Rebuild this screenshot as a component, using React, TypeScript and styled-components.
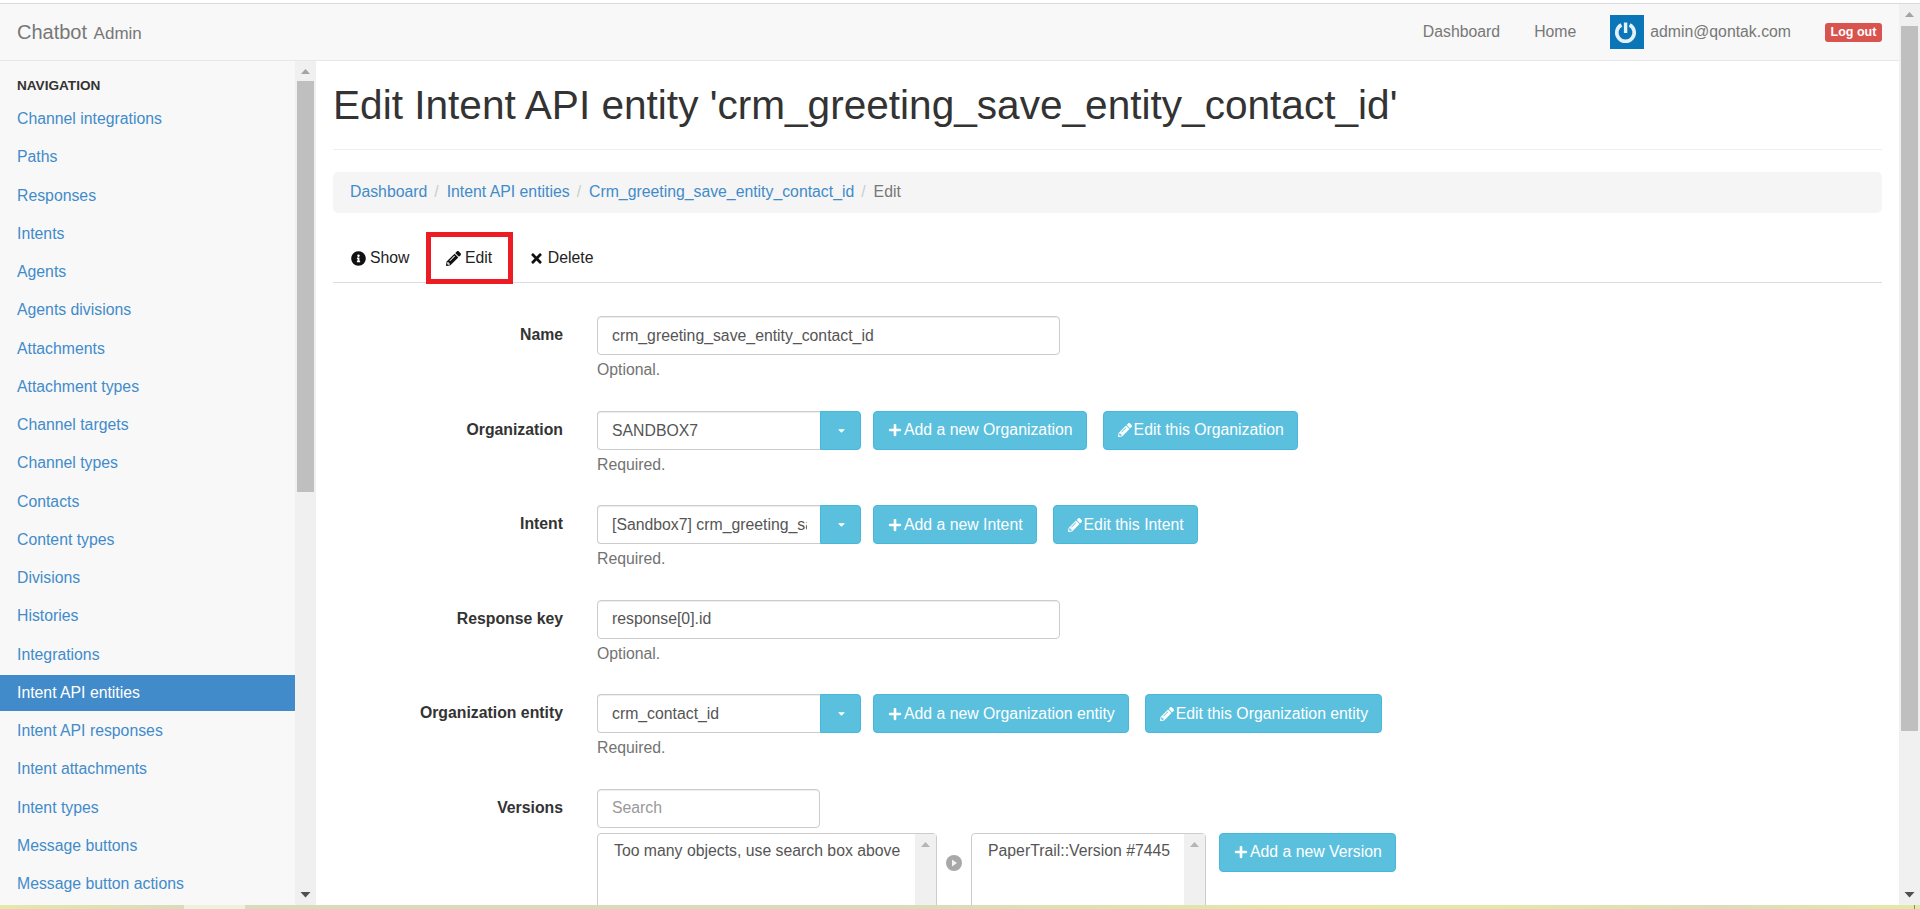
import styled, { createGlobalStyle } from 'styled-components'
import { FaInfoCircle, FaPencilAlt, FaPlus, FaTimes, FaCaretDown } from 'react-icons/fa'

const GlobalStyle = createGlobalStyle`
  html, body {
    margin: 0;
    height: 100%;
    overflow: hidden;
    background: #fff;
  }
  body {
    font-family: "Liberation Sans", Arial, sans-serif;
    font-size: 15.8px;
    color: #333;
  }
  * {
    box-sizing: border-box;
  }
`

const Shell = styled.div`
  height: 909px;
  display: flex;
  flex-direction: column;
`

const TopEdge = styled.div`
  height: 4px;
  flex: none;
  border-bottom: 1px solid #d9d9d9;
`

const Frame = styled.div`
  flex: 1;
  min-height: 0;
  display: flex;
`

const PageColumn = styled.div`
  flex: 1;
  min-width: 0;
  display: flex;
  flex-direction: column;
  overflow: hidden;
`

const BottomStrip = styled.div`
  height: 4px;
  flex: none;
  background: linear-gradient(
    to right,
    #e4e8a8 0,
    #d9dcba 184px,
    #eef1dc 184px,
    #eef1dc 245px,
    #d9dcba 245px,
    #d9dcb8 900px,
    #e3e8a6 1300px,
    #e2e8a8 1500px,
    #dcdcb8 1720px,
    #e2e8a8 1880px,
    #e2e8a8 1914px,
    #8b8b6a 1914px,
    #8b8b6a 1915px,
    #e2e8a8 1915px
  );
`

const ScrollTrack = styled.div`
  width: 21px;
  flex: none;
  display: flex;
  flex-direction: column;
  background: #f0f0f0;
`

const ScrollArrow = styled.svg`
  display: block;
  width: 21px;
  height: 20px;
  flex: none;
`

const ThumbSlot = styled.div`
  flex: 1;
  min-height: 0;
  padding: 0 2px;
`

const Thumb = styled.div<{ $top: number; $height: number }>`
  margin-top: ${(p) => p.$top}px;
  height: ${(p) => p.$height}px;
  background: #bfbfbf;
`

const Navbar = styled.nav`
  height: 57px;
  flex: none;
  background: #f8f8f8;
  border-bottom: 1px solid #e7e7e7;
  display: flex;
  align-items: center;
  justify-content: space-between;
  padding: 0 17px;
`

const Brand = styled.a`
  font-size: 20px;
  color: #777;

  small {
    font-size: 17px;
    margin-left: 1px;
  }
`

const NavLinks = styled.div`
  display: flex;
  align-items: center;
`

const NavLink = styled.a`
  color: #777;
  margin-right: 34px;
  display: flex;
  align-items: center;
`

const Avatar = styled.svg`
  width: 34px;
  height: 34px;
  margin-right: 6px;
  display: block;
`

const LogoutButton = styled.a`
  background: #d9534f;
  color: #fff;
  font-size: 12.5px;
  font-weight: bold;
  border-radius: 3px;
  width: 57px;
  height: 19px;
  line-height: 19px;
  text-align: center;
  margin-top: 1px;
`

const Layout = styled.div`
  flex: 1;
  min-height: 0;
  display: flex;
  align-items: stretch;
`

const Sidebar = styled.aside`
  width: 316px;
  flex: none;
  display: flex;
  background: #f8f8f8;
`

const SideNav = styled.div`
  flex: 1;
  min-width: 0;
  overflow: hidden;
`

const SideHeading = styled.div`
  font-size: 13.6px;
  font-weight: bold;
  text-transform: uppercase;
  color: #333;
  padding: 17px 17px 0;
  line-height: 16px;
  margin-bottom: 7px;
`

const SideList = styled.ul`
  list-style: none;
  margin: 0;
  padding: 0;
`

const SideLink = styled.a<{ $active?: boolean }>`
  display: block;
  height: 36px;
  line-height: 36px;
  margin-bottom: 2.25px;
  padding: 0 17px;
  color: ${(p) => (p.$active ? '#fff' : '#428bca')};
  background: ${(p) => (p.$active ? '#428bca' : 'transparent')};
`

const Main = styled.main`
  flex: 1;
  min-width: 0;
  overflow: hidden;
  padding: 0 17px;
`

const PageTitle = styled.h1`
  margin: 0 0 22px;
  height: 89px;
  font-size: 40.6px;
  font-weight: 500;
  line-height: 89px;
  color: #333;
  border-bottom: 1px solid #eee;
`

const Crumbs = styled.ol`
  list-style: none;
  margin: 0 0 19px;
  height: 41px;
  padding: 0 17px 2px;
  background: #f5f5f5;
  border-radius: 5px;
  display: flex;
  align-items: center;
`

const Crumb = styled.li`
  color: #777;

  & + &::before {
    content: '/';
    color: #ccc;
    padding: 0 8px 0 7px;
  }

  a {
    color: #428bca;
  }
`

const Tabs = styled.ul`
  list-style: none;
  margin: 0 0 33px;
  padding: 0 0 0 1px;
  height: 51px;
  display: flex;
  gap: 2.5px;
  border-bottom: 1px solid #ddd;
`

const Tab = styled.li<{ $marked?: boolean }>`
  position: relative;
  height: 52px;
  padding: 0 17px;
  display: flex;
  align-items: center;
  gap: 4px;
  color: #222;

  svg {
    font-size: 15px;
    color: #111;
  }

  ${(p) =>
    p.$marked &&
    `
    &::after {
      content: '';
      position: absolute;
      left: -3px;
      right: -4px;
      top: 0;
      bottom: 0;
      border: 5px solid #ed1c24;
    }
  `}
`

const FormRow = styled.div`
  display: grid;
  grid-template-columns: 230px 1fr;
  column-gap: 34px;
  margin-bottom: 29.5px;
`

const RowLabel = styled.label`
  font-weight: bold;
  text-align: right;
  color: #333;
  line-height: 38px;
`

const Controls = styled.div`
  display: flex;
  align-items: stretch;
  gap: 16px;
`

const TextField = styled.input<{ $width: number }>`
  display: block;
  width: ${(p) => p.$width}px;
  height: 39px;
  padding: 0 14px;
  border: 1px solid #ccc;
  border-radius: 4px;
  box-shadow: inset 0 1px 1px rgba(0, 0, 0, 0.075);
  font: inherit;
  color: #555;

  &::placeholder {
    color: #999;
  }
`

const Combo = styled.div`
  display: flex;
  height: 39px;
  margin-right: -4px;
`

const ComboField = styled.div`
  width: 223px;
  padding: 0 13px 0 14px;
  line-height: 37px;
  color: #555;
  background: #fff;
  border: 1px solid #ccc;
  border-right: 0;
  border-radius: 4px 0 0 4px;
  box-shadow: inset 0 1px 1px rgba(0, 0, 0, 0.075);
`

const ComboValue = styled.div`
  white-space: nowrap;
  overflow: hidden;
`

const ComboToggle = styled.button`
  width: 41px;
  border: 1px solid #46b8da;
  border-radius: 0 4px 4px 0;
  background: #5bc0de;
  color: #fff;
  padding: 0 0 0 1px;
  display: flex;
  align-items: center;
  justify-content: center;
  font-size: 11px;
`

const InfoButton = styled.button`
  height: 39px;
  padding: 0 13px 0 14px;
  border: 1px solid #46b8da;
  border-radius: 4px;
  background: #5bc0de;
  color: #fff;
  font: inherit;
  white-space: nowrap;
  display: flex;
  align-items: center;
  gap: 2px;

  svg {
    font-size: 14px;
  }
`

const HelpText = styled.div`
  margin-top: 3px;
  line-height: 23px;
  color: #737373;
`

const DualPicker = styled.div`
  display: flex;
  align-items: flex-start;
  margin-top: 5px;
`

const ListBox = styled.div<{ $width: number }>`
  width: ${(p) => p.$width}px;
  height: 226px;
  flex: none;
  position: relative;
  border: 1px solid #ccc;
  border-radius: 4px 4px 0 0;
  padding: 6px 30px 0 16px;
  line-height: 21px;
  color: #555;
  background: #fff;
  white-space: nowrap;
`

const ListBoxTrack = styled.div`
  position: absolute;
  top: 0;
  right: 0;
  bottom: 0;
  width: 21px;
  background: #f0f0f0;
`

const MoveIcon = styled.svg`
  width: 34px;
  height: 20px;
  flex: none;
  margin-top: 20px;
`

const AddVersionButton = styled(InfoButton)`
  margin-left: 13px;
`

const channelLinks = [
  'Channel integrations',
  'Paths',
  'Responses',
  'Intents',
  'Agents',
  'Agents divisions',
  'Attachments',
  'Attachment types',
  'Channel targets',
  'Channel types',
  'Contacts',
  'Content types',
  'Divisions',
  'Histories',
  'Integrations',
  'Intent API entities',
  'Intent API responses',
  'Intent attachments',
  'Intent types',
  'Message buttons',
  'Message button actions',
]

const ArrowUp = ({ fill = '#a3a3a3' }: { fill?: string }) => (
  <ScrollArrow viewBox="0 0 21 20">
    <polygon points="6,13 10.5,8 15,13" fill={fill} />
  </ScrollArrow>
)

const ArrowDown = () => (
  <ScrollArrow viewBox="0 0 21 20">
    <polygon points="5.5,7 15.5,7 10.5,12.5" fill="#505050" />
  </ScrollArrow>
)

const Scrollbar = ({ top, height }: { top: number; height: number }) => (
  <ScrollTrack>
    <ArrowUp />
    <ThumbSlot>
      <Thumb $top={top} $height={height} />
    </ThumbSlot>
    <ArrowDown />
  </ScrollTrack>
)

const Logo = () => (
  <Avatar viewBox="0 0 34 34">
    <rect width="34" height="34" fill="#0a76b7" />
    <path d="M11.4 9.8 A8.75 8.75 0 1 0 19.6 9.8" fill="none" stroke="#e4f1f8" strokeWidth="3.6" />
    <rect x="13.9" y="7.5" width="3.4" height="10.5" fill="#e4f1f8" />
  </Avatar>
)

const SelectRow = ({ label, value, buttons }: { label: string; value: string; buttons: string[] }) => (
  <FormRow>
    <RowLabel>{label}</RowLabel>
    <div>
      <Controls>
        <Combo>
          <ComboField>
            <ComboValue>{value}</ComboValue>
          </ComboField>
          <ComboToggle>
            <FaCaretDown />
          </ComboToggle>
        </Combo>
        <InfoButton>
          <FaPlus /> {buttons[0]}
        </InfoButton>
        <InfoButton>
          <FaPencilAlt /> {buttons[1]}
        </InfoButton>
      </Controls>
      <HelpText>Required.</HelpText>
    </div>
  </FormRow>
)

export default function App() {
  return (
    <Shell>
      <GlobalStyle />
      <TopEdge />
      <Frame>
        <PageColumn>
          <Navbar>
            <Brand>
              Chatbot <small>Admin</small>
            </Brand>
            <NavLinks>
              <NavLink>Dashboard</NavLink>
              <NavLink>Home</NavLink>
              <NavLink>
                <Logo />
                admin@qontak.com
              </NavLink>
              <LogoutButton>Log out</LogoutButton>
            </NavLinks>
          </Navbar>
          <Layout>
            <Sidebar>
              <SideNav>
                <SideHeading>Navigation</SideHeading>
                <SideList>
                  {channelLinks.map((name) => (
                    <li key={name}>
                      <SideLink $active={name === 'Intent API entities'}>{name}</SideLink>
                    </li>
                  ))}
                </SideList>
              </SideNav>
              <Scrollbar top={0} height={411} />
            </Sidebar>
            <Main>
              <PageTitle>Edit Intent API entity 'crm_greeting_save_entity_contact_id'</PageTitle>
              <Crumbs>
                <Crumb>
                  <a>Dashboard</a>
                </Crumb>
                <Crumb>
                  <a>Intent API entities</a>
                </Crumb>
                <Crumb>
                  <a>Crm_greeting_save_entity_contact_id</a>
                </Crumb>
                <Crumb>Edit</Crumb>
              </Crumbs>
              <Tabs>
                <Tab>
                  <FaInfoCircle /> Show
                </Tab>
                <Tab $marked>
                  <FaPencilAlt /> Edit
                </Tab>
                <Tab>
                  <FaTimes /> Delete
                </Tab>
              </Tabs>
              <FormRow>
                <RowLabel>Name</RowLabel>
                <div>
                  <TextField $width={463} defaultValue="crm_greeting_save_entity_contact_id" />
                  <HelpText>Optional.</HelpText>
                </div>
              </FormRow>
              <SelectRow
                label="Organization"
                value="SANDBOX7"
                buttons={['Add a new Organization', 'Edit this Organization']}
              />
              <SelectRow
                label="Intent"
                value="[Sandbox7] crm_greeting_save_entity"
                buttons={['Add a new Intent', 'Edit this Intent']}
              />
              <FormRow>
                <RowLabel>Response key</RowLabel>
                <div>
                  <TextField $width={463} defaultValue="response[0].id" />
                  <HelpText>Optional.</HelpText>
                </div>
              </FormRow>
              <SelectRow
                label="Organization entity"
                value="crm_contact_id"
                buttons={['Add a new Organization entity', 'Edit this Organization entity']}
              />
              <FormRow>
                <RowLabel>Versions</RowLabel>
                <div>
                  <TextField $width={223} placeholder="Search" />
                  <DualPicker>
                    <ListBox $width={340}>
                      Too many objects, use search box above
                      <ListBoxTrack>
                        <ArrowUp fill="#b5b5b5" />
                      </ListBoxTrack>
                    </ListBox>
                    <MoveIcon viewBox="0 0 34 20">
                      <circle cx="17" cy="10" r="8" fill="#a8a8a8" />
                      <polygon points="15,6.5 20,10 15,13.5" fill="#f4f4f4" />
                    </MoveIcon>
                    <ListBox $width={235}>
                      PaperTrail::Version #7445
                      <ListBoxTrack>
                        <ArrowUp fill="#b5b5b5" />
                      </ListBoxTrack>
                    </ListBox>
                    <AddVersionButton>
                      <FaPlus /> Add a new Version
                    </AddVersionButton>
                  </DualPicker>
                </div>
              </FormRow>
            </Main>
          </Layout>
        </PageColumn>
        <Scrollbar top={2} height={705} />
      </Frame>
      <BottomStrip />
    </Shell>
  )
}
